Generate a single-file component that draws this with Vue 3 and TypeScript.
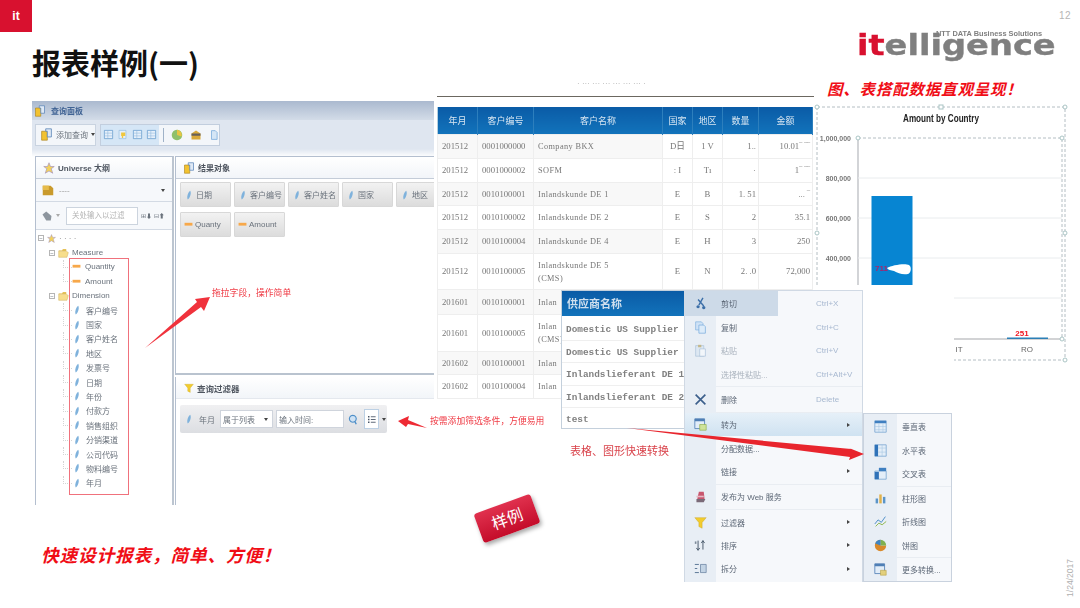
<script setup lang="ts">
import { h } from 'vue'

// icon shapes, all on a 16x16 grid
type Shape = { d: string; f?: string; s?: string; w?: number }
const shapes: Record<string, Shape[]> = {
  dim: [{ d: 'M10 1 C12 5 10 12 6 15 C4 11 6 4 10 1Z', f: '#7fb2dc' }],
  measure: [{ d: 'M1 5h14v5H1z', f: '#f7a84a' }],
  cube: [
    { d: 'M2 4h7v11H2z', f: '#f2c230', s: '#a8801a', w: 0.8 },
    { d: 'M7 1h7v10H9V4H7z', f: '#dfe9f5', s: '#5c86b8', w: 1 }
  ],
  star: [
    { d: 'M8 1l2 5 5 0-4 3 2 6-5-3-5 3 2-6-4-3 5 0z', f: '#f3d25c', s: '#9a8ac0', w: 0.8 }
  ],
  folder: [
    { d: 'M1 5h5l1-2h5v3H1z', f: '#e6c25a' },
    { d: 'M1 6h11l3 2-2 7H1z', f: '#f7de8c', s: '#caa548', w: 0.6 }
  ],
  db: [{ d: 'M2 3h9l3 3v8H2z', f: '#c99a2c' }, { d: 'M2 3h7v5H2z', f: '#e6bb4a' }],
  hand: [{ d: 'M2 6l5-4 7 6-1 6-6 0z', f: '#8d959e' }],
  grid: [
    { d: 'M2 2h12v12H2z', f: '#e6f0fa', s: '#5b93c9', w: 1 },
    { d: 'M2 6h12M2 10h12M7 2v12', s: '#8db6dc', w: 0.8 }
  ],
  bulb: [
    { d: 'M3 2h10v12H3z', f: '#e6f0fa', s: '#7fb0dc', w: 0.8 },
    { d: 'M6 5h6v5H9v3H7v-3H6z', f: '#f0c73e' }
  ],
  globe: [
    { d: 'M8 1a7 7 0 1 0 .01 0z', f: '#8fc06a' },
    { d: 'M8 1a7 7 0 0 1 6 9l-6-2z', f: '#e8c544' }
  ],
  box: [{ d: 'M2 6l6-4 6 4v8H2z', f: '#d9a93a' }, { d: 'M2 6h12v3H2z', f: '#67605a' }],
  doc: [{ d: 'M4 1h6l3 3v11H4z', f: '#d5e6f6', s: '#5f9ad6', w: 1 }],
  search: [
    { d: 'M7 2a5 5 0 1 0 .01 0z', f: '#cfe2f4', s: '#4d8ec8', w: 1.6 },
    { d: 'M10 11l2 4', s: '#4d8ec8', w: 2 }
  ],
  list: [
    { d: 'M3 3h2v2H3zM3 7h2v2H3zM3 11h2v2H3z', f: '#3d4a5c' },
    { d: 'M7 4h7M7 8h7M7 12h7', s: '#3d4a5c', w: 1.2 }
  ],
  funnel: [{ d: 'M1 2h14L10 8v7l-4-2V8z', f: '#f2cc2e', s: '#c8a420', w: 0.5 }],
  cut: [
    { d: 'M11 1L6 10M5 3l7 8', s: '#3c6fa8', w: 1.7 },
    { d: 'M5 10a2 2 0 1 0 .01 0zM12 11a2 2 0 1 0 .01 0z', f: '#3c6fa8' }
  ],
  copy: [
    { d: 'M2 1h7l2 2v8H2z', f: '#cfe2f6', s: '#7aaedd', w: 0.8 },
    { d: 'M6 5h6l2 2v8H6z', f: '#dcebf9', s: '#6ea6da', w: 0.8 }
  ],
  paste: [
    { d: 'M2 2h10v13H2z', f: '#dde8f2', s: '#a8c0d8', w: 0.8 },
    { d: 'M5 1h4v3H5z', f: '#c4b88c' },
    { d: 'M7 6h7v9H7z', f: '#f2f6fa', s: '#a8c0d8', w: 0.8 }
  ],
  del: [{ d: 'M2 2l12 12M14 2L2 14', s: '#3c5f8c', w: 2 }],
  convert: [
    { d: 'M1 1h12v12H1z', f: '#e2edf8', s: '#4f7fb5', w: 1 },
    { d: 'M1 1h12v3H1z', f: '#4f7fb5' },
    { d: 'M7 8h8v7H7z', f: '#cfe39a', s: '#8fae48', w: 0.8 }
  ],
  publish: [
    { d: 'M3 11h11l-2 4H3z', f: '#7a6a78' },
    { d: 'M6 2h6l1 9H4z', f: '#c8566e' },
    { d: 'M3 7h9v2H3z', f: '#e8b9c4' }
  ],
  sort: [
    { d: 'M5 2v11M3 11l2 3 2-3', s: '#4a5a6c', w: 1.2 },
    { d: 'M11 2v11M9 5l2-3 2 3', s: '#4a5a6c', w: 1.2 },
    { d: 'M1 3h2v3H1z', f: '#7c8a98' }
  ],
  split: [
    { d: 'M1 3h5M1 8h3M1 13h5', s: '#5a7696', w: 1.2 },
    { d: 'M8 3h7v10H8z', f: '#c2d3e4', s: '#5a7696', w: 0.8 }
  ],
  vtable: [
    { d: 'M1 1h14v14H1z', f: '#e4eef8', s: '#7aa6d2', w: 1 },
    { d: 'M1 1h14v3H1z', f: '#3f7fc0' },
    { d: 'M1 8h14M1 12h14M6 4v11M11 4v11', s: '#a8c6e2', w: 0.7 }
  ],
  htable: [
    { d: 'M1 1h14v14H1z', f: '#e4eef8', s: '#7aa6d2', w: 1 },
    { d: 'M1 1h4v14H1z', f: '#2f72b8' },
    { d: 'M5 5h10M5 10h10M10 1v14', s: '#a8c6e2', w: 0.7 }
  ],
  xtable: [
    { d: 'M1 5h14v10H1z', f: '#e4eef8', s: '#7aa6d2', w: 1 },
    { d: 'M6 1h9v4H6z', f: '#3f7fc0' },
    { d: 'M1 6h5v9H1z', f: '#2f72b8' }
  ],
  bars: [
    { d: 'M2 8h3v6H2z', f: '#5a94c8' },
    { d: 'M6.500 3h3v11h-3z', f: '#e0b24a' },
    { d: 'M11 6h3v8h-3z', f: '#5a94c8' }
  ],
  line: [
    { d: 'M1 11l4-5 4 3 5-7', s: '#4d8ec8', w: 1.2 },
    { d: 'M2 14l4-4 4 2 5-4', s: '#8fb84e', w: 1.2 }
  ],
  pie: [
    { d: 'M8 1a7 7 0 1 0 7 7H8z', f: '#d98a2b' },
    { d: 'M8 1a7 7 0 0 1 7 7H8z', f: '#7fb050' },
    { d: 'M1.500 5.500A7 7 0 0 1 8 1v7z', f: '#3f86c4' }
  ],
  more: [
    { d: 'M1 1h12v12H1z', f: '#e2edf8', s: '#4f7fb5', w: 1 },
    { d: 'M1 1h12v3H1z', f: '#4f7fb5' },
    { d: 'M8 9h7v6H8z', f: '#e2cf7c', s: '#b8a040', w: 0.7 }
  ]
}

// tiny functional icon so the template stays readable
const Ico = (props: { name: string; size?: number }) =>
  h(
    'svg',
    { viewBox: '0 0 16 16', width: props.size ?? 12, height: props.size ?? 12, style: 'flex:none;display:block' },
    shapes[props.name].map((p) =>
      h('path', { d: p.d, fill: p.f ?? 'none', stroke: p.s ?? 'none', 'stroke-width': p.w ?? 1 })
    )
  )

const measures = ['Quantity', 'Amount']
const dimensions = ['客户编号', '国家', '客户姓名', '地区', '发票号', '日期', '年份', '付款方', '销售组织', '分销渠道', '公司代码', '物料编号', '年月']
const chips = ['日期', '客户编号', '客户姓名', '国家', '地区']

const columns = ['年月', '客户编号', '客户名称', '国家', '地区', '数量', '金额']
type Row = { c: string[]; h: number }
const rows: Row[] = [
  { h: 24, c: ['201512', '0001000000', 'Company BKX', 'D日', '1 V', '1..', '10.01‾ ‾‾'] },
  { h: 24, c: ['201512', '0001000002', 'SOFM', ': I', 'Tı', '·', '1‾ ‾‾'] },
  { h: 23, c: ['201512', '0010100001', 'Inlandskunde DE 1', 'E', 'B', '1. 51', '... ‾'] },
  { h: 24, c: ['201512', '0010100002', 'Inlandskunde DE 2', 'E', 'S', '2', '35.1'] },
  { h: 24, c: ['201512', '0010100004', 'Inlandskunde DE 4', 'E', 'H', '3', '250'] },
  { h: 36, c: ['201512', '0010100005', 'Inlandskunde DE 5\n(CMS)', 'E', 'N', '2. .0', '72,000'] },
  { h: 25, c: ['201601', '0010100001', 'Inlan', '', '', '', ''] },
  { h: 37, c: ['201601', '0010100005', 'Inlan\n(CMS)', '', '', '', ''] },
  { h: 23, c: ['201602', '0010100001', 'Inlan', '', '', '', ''] },
  { h: 24, c: ['201602', '0010100004', 'Inlan', '', '', '', ''] }
]

const suppliers = ['Domestic US Supplier', 'Domestic US Supplier', 'Inlandslieferant DE 1', 'Inlandslieferant DE 2', 'test']

type MenuItem = { label: string; icon?: string; key?: string; arrow?: boolean; sep?: boolean; cls?: string }
const menu: MenuItem[] = [
  { label: '剪切', icon: 'cut', key: 'Ctrl+X', cls: 'cut-hl' },
  { label: '复制', icon: 'copy', key: 'Ctrl+C' },
  { label: '粘贴', icon: 'paste', key: 'Ctrl+V', cls: 'dim' },
  { label: '选择性粘贴...', key: 'Ctrl+Alt+V', cls: 'dim', sep: true },
  { label: '删除', icon: 'del', key: 'Delete', sep: true },
  { label: '转为', icon: 'convert', arrow: true, cls: 'active' },
  { label: '分配数据...' },
  { label: '链接', arrow: true, sep: true },
  { label: '发布为 Web 服务', icon: 'publish', sep: true },
  { label: '过滤器', icon: 'funnel', arrow: true },
  { label: '排序', icon: 'sort', arrow: true },
  { label: '拆分', icon: 'split', arrow: true }
]
const submenu: MenuItem[] = [
  { label: '垂直表', icon: 'vtable' },
  { label: '水平表', icon: 'htable' },
  { label: '交叉表', icon: 'xtable', sep: true },
  { label: '柱形图', icon: 'bars' },
  { label: '折线图', icon: 'line' },
  { label: '饼图', icon: 'pie', sep: true },
  { label: '更多转换...', icon: 'more' }
]

const yAxis = [
  { y: 138, t: '1,000,000' },
  { y: 178, t: '800,000' },
  { y: 218, t: '600,000' },
  { y: 258, t: '400,000' }
]
const handles = [
  [817, 107], [1065, 107], [817, 233], [1065, 233], [858, 138], [1062, 138], [1062, 339], [1065, 360]
]
</script>

<template>
  <div class="slide">
    <div class="corner">it</div>
    <h1 class="title">报表样例(一)</h1>
    <div class="page-no">12</div>

    <div class="logo"><span class="logo-it">it</span><span class="logo-rest">elligence</span></div>
    <span class="logo-sub">NTT DATA Business Solutions</span>

    <p class="slogan chart-slogan">图、表搭配数据直观呈现！</p>

    <!-- query panel screenshot -->
    <section class="query">
      <div class="query-head"><Ico name="cube" :size="12" /><span>查询面板</span></div>
      <div class="toolbar">
        <div class="tool-btn"><Ico name="cube" :size="13" /><span>添加查询</span><i class="caret"></i></div>
        <div class="tool-group">
          <div class="tool-on">
            <Ico name="grid" :size="11" /><Ico name="bulb" :size="11" /><Ico name="grid" :size="11" /><Ico name="grid" :size="11" />
          </div>
          <b class="tool-sep"></b>
          <Ico name="globe" :size="12" /><Ico name="box" :size="12" /><Ico name="doc" :size="10" />
        </div>
      </div>

      <div class="query-body">
        <aside class="outline">
          <div class="pane-head"><Ico name="star" :size="12" /><b>Universe 大纲</b></div>
          <div class="select-row"><Ico name="db" :size="14" /><span class="faint">----</span><i class="caret"></i></div>
          <div class="filter-row">
            <Ico name="hand" :size="12" />
            <i class="caret"></i>
            <span class="filter-input">关处输入以过滤</span>
            <span class="expand">⊞⬇ ⊟⬆</span>
          </div>
          <div class="tree">
            <div class="tree-row root"><span class="minus">−</span><Ico name="star" :size="9" /><span class="faint">· · · ·</span></div>
            <div class="tree-row folder"><span class="minus">−</span><Ico name="folder" :size="11" /><span>Measure</span></div>
            <div v-for="m in measures" :key="m" class="tree-row leaf"><Ico name="measure" :size="9" /><span>{{ m }}</span></div>
            <div class="tree-row folder"><span class="minus">−</span><Ico name="folder" :size="11" /><span>Dimension</span></div>
            <div v-for="d in dimensions" :key="d" class="tree-row leaf"><Ico name="dim" :size="10" /><span>{{ d }}</span></div>
            <div class="tree-mark"></div>
          </div>
        </aside>

        <div class="work">
          <div class="result">
            <div class="pane-head"><Ico name="cube" :size="12" /><b>结果对象</b></div>
            <div class="chips">
              <div v-for="c in chips" :key="c" class="chip"><Ico name="dim" :size="10" /><span>{{ c }}</span></div>
              <div v-for="m in measures" :key="m" class="chip"><Ico name="measure" :size="9" /><span>{{ m === 'Quantity' ? 'Quanty' : m }}</span></div>
            </div>
          </div>
          <div class="filter-pane">
            <div class="pane-head"><Ico name="funnel" :size="10" /><b>查询过滤器</b></div>
            <div class="filter-bar">
              <Ico name="dim" :size="10" />
              <span class="filter-name">年月</span>
              <span class="field pick">属于列表<i class="caret"></i></span>
              <span class="field time">输入时间:</span>
              <Ico name="search" :size="11" />
              <span class="list-btn"><Ico name="list" :size="11" /></span>
              <i class="caret"></i>
            </div>
          </div>
        </div>
      </div>
    </section>

    <!-- report table screenshot -->
    <section class="report">
      <div class="report-title">· ··· ··· ··· ··· ··· ··· ·</div>
      <div class="report-rule"></div>
      <table class="grid">
        <colgroup>
          <col style="width: 40px" /><col style="width: 56px" /><col style="width: 129px" />
          <col style="width: 30px" /><col style="width: 30px" /><col style="width: 36px" /><col style="width: 54px" />
        </colgroup>
        <thead>
          <tr><th v-for="c in columns" :key="c">{{ c }}</th></tr>
        </thead>
        <tbody>
          <tr v-for="(r, i) in rows" :key="i" :style="{ height: r.h + 'px' }">
            <td v-for="(v, j) in r.c" :key="j" :class="{ num: j > 4, name: j === 2, mid: j === 3 || j === 4 }">{{ v }}</td>
          </tr>
        </tbody>
      </table>
    </section>

    <!-- chart with selection frame -->
    <svg class="chart" viewBox="817 100 256 265" width="256" height="265">
      <g fill="none" stroke="#b4bec3" stroke-dasharray="3 2" stroke-width="1">
        <path d="M817 107H1065V360H954" />
        <path d="M817 107V285" />
        <path d="M858 138H1062V339" />
      </g>
      <path d="M858 138V285" stroke="#b5b8bc" stroke-width="1.200" />
      <path d="M858 178H1062M858 218H1062M858 258H1062M954 298H1062" stroke="#e9ecee" />
      <path d="M954 339H1062" stroke="#a5a8ab" stroke-width="1.200" />
      <g v-for="a in yAxis" :key="a.y">
        <text x="851" :y="a.y + 3" text-anchor="end" class="axis-num">{{ a.t }}</text>
      </g>
      <text x="941" y="122" text-anchor="middle" class="chart-title" textLength="76" lengthAdjust="spacingAndGlyphs">Amount by Country</text>
      <rect x="871.500" y="196" width="41" height="89" fill="#0785d2" />
      <text x="875" y="271" class="bar-label">711</text>
      <path d="M887 268c5-3 18-5 22-3 3 2 2 8-1 9-6 1-10-1-14-3-3-1-6-1-7-3z" fill="#fff" />
      <rect x="1007" y="337.500" width="41" height="1.500" fill="#2b7fb6" />
      <text x="1022" y="336" text-anchor="middle" class="red-num">251</text>
      <text x="959" y="352" text-anchor="middle" class="axis-name">IT</text>
      <text x="1027" y="352" text-anchor="middle" class="axis-name">RO</text>
      <circle v-for="p in handles" :key="p.join()" :cx="p[0]" :cy="p[1]" r="2" fill="#fff" stroke="#a9c4c4" />
      <rect x="939" y="105" width="4" height="4" fill="#fff" stroke="#a9c4c4" />
    </svg>

    <!-- supplier dropdown and context menus on top of the table -->
    <section class="supplier">
      <div class="supplier-head">供应商名称</div>
      <div v-for="(s, i) in suppliers" :key="i" class="supplier-row">{{ s }}</div>
    </section>

    <section class="menu">
      <template v-for="m in menu" :key="m.label">
        <div class="menu-row" :class="m.cls">
          <span class="menu-ico"><Ico v-if="m.icon" :name="m.icon" :size="13" /></span>
          <span class="menu-label">{{ m.label }}</span>
          <span class="menu-key">{{ m.key }}</span>
          <i v-if="m.arrow" class="menu-arrow"></i>
        </div>
        <div v-if="m.sep" class="menu-sep"></div>
      </template>
    </section>

    <section class="submenu">
      <template v-for="m in submenu" :key="m.label">
        <div class="sub-row">
          <span class="sub-ico"><Ico :name="m.icon!" :size="13" /></span>
          <span class="menu-label">{{ m.label }}</span>
        </div>
        <div v-if="m.sep" class="menu-sep sub"></div>
      </template>
    </section>

    <!-- annotation arrows -->
    <svg class="arrows" width="1080" height="608">
      <polygon points="145,348 197,302 195,299 210,297 204,311 201,307" fill="#f0323c" />
      <polygon points="398,421 409,416 408,420 427,428 408,424 406,427" fill="#ee2a34" />
      <polygon points="627,428 851,449 849,448 864,454 849,460 850,457" fill="#e8252d" />
    </svg>

    <span class="note note-drag">拖拉字段，操作简单</span>
    <span class="note note-filter">按需添加筛选条件，方便易用</span>
    <span class="note note-switch">表格、图形快速转换</span>

    <div class="stamp">样例</div>
    <p class="slogan design-slogan">快速设计报表，简单、方便！</p>
    <div class="date">1/24/2017</div>
  </div>
</template>

<style>
html,
body {
  margin: 0;
  background: #fff;
}
</style>

<style scoped>
.slide {
  position: relative;
  width: 1080px;
  height: 608px;
  overflow: hidden;
  background: #fff;
  font-family: "Liberation Sans", "Noto Sans CJK SC", sans-serif;
}

.corner {
  width: 32px;
  height: 32px;
  background: #d8112f;
  color: #fff;
  font-weight: 700;
  font-size: 12px;
  line-height: 32px;
  text-align: center;
}

.title {
  position: absolute;
  left: 32px;
  top: 41px;
  margin: 0;
  font-family: "Noto Sans CJK SC", sans-serif;
  font-size: 29px;
  line-height: 42px;
  font-weight: 700;
  color: #111;
}

.page-no {
  position: absolute;
  right: 9px;
  top: 10px;
  font-size: 10px;
  letter-spacing: 0.5px;
  color: #b5b5b5;
}

.logo {
  position: absolute;
  left: 857px;
  top: 25px;
  font-family: "DejaVu Sans", sans-serif;
  font-weight: 700;
  font-size: 29px;
  line-height: 40px;
  white-space: nowrap;
  transform: scaleX(1.16);
  transform-origin: left center;
  -webkit-text-stroke: 0.4px currentColor;
  filter: blur(0.3px);
}
.logo-it {
  color: #d8112f;
}
.logo-rest {
  color: #7f7f7f;
}
.logo-sub {
  position: absolute;
  left: 936px;
  top: 29px;
  font-size: 7.400px;
  line-height: 9px;
  font-weight: 700;
  color: #808080;
  white-space: nowrap;
  filter: blur(0.2px);
}

.slogan {
  position: absolute;
  margin: 0;
  font-family: "Noto Sans CJK SC", sans-serif;
  font-weight: 700;
  font-style: italic;
  color: #f00d16;
  white-space: nowrap;
}
.chart-slogan {
  left: 827px;
  top: 78px;
  font-size: 15.500px;
  line-height: 21px;
  letter-spacing: 0.800px;
}
.design-slogan {
  left: 41px;
  top: 542px;
  font-size: 17.700px;
  line-height: 25px;
  letter-spacing: 0.800px;
}

/* query panel */
.query {
  position: absolute;
  left: 32px;
  top: 101px;
  width: 402px;
  height: 404px;
  display: flex;
  flex-direction: column;
  font-size: 8px;
  color: #6a727c;
  white-space: nowrap;
  filter: blur(0.35px);
}
.query-head {
  height: 19px;
  flex: none;
  display: flex;
  align-items: center;
  gap: 5px;
  padding-left: 2px;
  background: linear-gradient(#aab9cf, #d3dce8);
  color: #3f6293;
  font-weight: 700;
}
.toolbar {
  height: 29px;
  flex: none;
  display: flex;
  align-items: center;
  gap: 4px;
  padding-left: 3px;
  background: #dfe6f0;
}
.tool-btn {
  width: 61px;
  height: 22px;
  box-sizing: border-box;
  display: flex;
  align-items: center;
  gap: 3px;
  padding-left: 4px;
  background: #f3f6fa;
  border: 1px solid #c9d3e0;
}
.tool-group {
  width: 120px;
  height: 22px;
  box-sizing: border-box;
  display: flex;
  align-items: center;
  gap: 7px;
  background: #f3f6fa;
  border: 1px solid #c2cede;
}
.tool-on {
  width: 61px;
  height: 100%;
  display: flex;
  align-items: center;
  justify-content: space-around;
  background: #d5e6f6;
}
.tool-sep {
  width: 1px;
  height: 14px;
  margin-left: -3px;
  background: #9fb2c8;
}
.caret {
  display: inline-block;
  flex: none;
  width: 0;
  height: 0;
  border-left: 2.500px solid transparent;
  border-right: 2.500px solid transparent;
  border-top: 3px solid #444;
}
.query-body {
  flex: 1;
  min-height: 0;
  display: flex;
  gap: 1px;
  padding: 7px 0 0 3px;
  background: linear-gradient(#dfe6f0 0, #fff 8px);
}
.outline {
  width: 139px;
  flex: none;
  box-sizing: border-box;
  border-left: 1.500px solid #b4bfcf;
  border-right: 2px solid #bcc5d0;
  border-top: 1.500px solid #b4bfcf;
  background: #fff;
}
.pane-head {
  height: 21px;
  display: flex;
  align-items: center;
  gap: 3px;
  padding-left: 7px;
  border-bottom: 1px solid #c4ccd8;
  background: linear-gradient(#fff, #f2f5f9);
  color: #4f5660;
}
.select-row {
  height: 22px;
  display: flex;
  align-items: center;
  gap: 4px;
  padding: 0 7px 0 5px;
  border-bottom: 1px solid #d3dae4;
  background: #f6f8fb;
}
.select-row .caret {
  margin-left: auto;
}
.faint {
  color: #999;
}
.filter-row {
  height: 27px;
  display: flex;
  align-items: center;
  gap: 3px;
  padding-left: 5px;
  border-bottom: 1px solid #d3dae4;
  background: #f6f8fb;
}
.filter-row .caret {
  border-top-color: #aaa;
}
.filter-input {
  width: 72px;
  height: 18px;
  box-sizing: border-box;
  margin-left: 3px;
  line-height: 16px;
  padding-left: 5px;
  background: #fff;
  border: 1px solid #ccd4de;
  color: #b3b3b3;
  font-size: 7.500px;
}
.expand {
  font-size: 6px;
  white-space: nowrap;
}
.tree {
  position: relative;
  padding-top: 1px;
}
.tree-row {
  position: relative;
  height: 14.400px;
  display: flex;
  align-items: center;
  gap: 3px;
}
.tree-row.root {
  padding-left: 2px;
}
.tree-row.folder {
  padding-left: 13px;
}
.tree-row.leaf {
  padding-left: 36px;
  gap: 4px;
}
.tree-row.leaf::before {
  content: "";
  position: absolute;
  left: 27px;
  top: 0;
  width: 8px;
  height: 50%;
  border-left: 1px dotted #d4d4d4;
  border-bottom: 1px dotted #d4d4d4;
}
.minus {
  width: 6px;
  height: 6px;
  box-sizing: border-box;
  flex: none;
  border: 1px solid #b5b5b5;
  font-size: 6px;
  line-height: 4px;
  text-align: center;
}
.tree-mark {
  position: absolute;
  left: 33px;
  top: 28px;
  width: 60px;
  height: 237px;
  box-sizing: border-box;
  border: 1px solid #f0717c;
}
.work {
  flex: 1;
  min-width: 0;
  display: flex;
  flex-direction: column;
}
.result {
  height: 219px;
  flex: none;
  box-sizing: border-box;
  overflow: hidden;
  border-left: 1.500px solid #b4bfcf;
  border-top: 1.500px solid #b4bfcf;
  border-bottom: 2px solid #b9c3cf;
  background: #fff;
}
.chips {
  display: flex;
  flex-wrap: wrap;
  gap: 5px 3px;
  width: 280px;
  padding: 3px 0 0 4px;
}
.chip {
  width: 51px;
  height: 25px;
  box-sizing: border-box;
  display: flex;
  align-items: center;
  gap: 2px;
  padding-left: 3px;
  background: linear-gradient(#f2f2f2, #dcdcdc);
  border: 1px solid #d8d8d8;
  border-radius: 1px;
}
.filter-pane {
  flex: 1;
  margin-top: 2px;
  border-left: 1.500px solid #b4bfcf;
  background: #fff;
}
.filter-pane .pane-head {
  height: 21px;
  padding-left: 8px;
  font-size: 8.500px;
  border-bottom: 1px solid #e4e8ee;
}
.filter-bar {
  width: 207px;
  height: 28px;
  box-sizing: border-box;
  margin: 6px 0 0 4px;
  display: flex;
  align-items: center;
  gap: 3px;
  padding-left: 4px;
  background: linear-gradient(#f0f0f2, #dcdee2);
  border-radius: 2px;
}
.filter-name {
  width: 18px;
  margin-left: 2px;
}
.field {
  height: 18px;
  box-sizing: border-box;
  display: flex;
  align-items: center;
  padding-left: 2px;
  background: #fff;
  border: 1px solid #cfd4dc;
}
.pick {
  width: 53px;
  justify-content: space-between;
  padding-right: 4px;
}
.time {
  width: 68px;
  margin-right: 1px;
}
.list-btn {
  width: 13px;
  height: 18px;
  margin-left: 2px;
  display: flex;
  align-items: center;
  justify-content: center;
  background: #fff;
  border: 1px solid #bcd0e4;
}

/* report */
.report {
  position: absolute;
  left: 437px;
  top: 78px;
  width: 377px;
  filter: blur(0.35px);
}
.report-title {
  height: 18px;
  padding-left: 140px;
  font-size: 8px;
  line-height: 12px;
  color: #bbb;
}
.report-rule {
  height: 1px;
  margin-bottom: 10px;
  background: #6b6760;
}
.grid {
  width: 375px;
  border-collapse: collapse;
  table-layout: fixed;
  border-left: 1px solid #b4d0e0;
  font-family: "Liberation Serif", "Noto Sans CJK SC", serif;
  font-size: 8.700px;
  color: #777;
}
.grid th {
  height: 27px;
  padding: 0;
  background: linear-gradient(#0a5ba6, #1273bb);
  border-right: 1px solid #2d7fbd;
  color: #d8e6f2;
  font-family: "Noto Sans CJK SC", sans-serif;
  font-size: 9px;
  font-weight: 400;
}
.grid td {
  padding: 0 4px;
  border: 1px solid #eee;
  overflow: hidden;
  white-space: nowrap;
  line-height: 13px;
}
.grid tbody tr:nth-child(odd) td {
  background: #f8f8f8;
}
.grid td.name {
  white-space: pre-line;
  font-size: 8.300px;
  letter-spacing: 0.400px;
}
.grid td.num {
  text-align: right;
  background: #fff !important;
  padding-right: 2px;
}
.grid td.mid {
  text-align: center;
  background: #fff !important;
}

/* chart */
.chart {
  position: absolute;
  left: 817px;
  top: 100px;
  overflow: visible;
  filter: blur(0.3px);
}
.chart-title {
  font-size: 11px;
  font-weight: 700;
  fill: #222;
}
.axis-num {
  font-size: 7px;
  font-weight: 700;
  fill: #777;
}
.axis-name {
  font-size: 8px;
  fill: #666;
}
.bar-label {
  font-size: 8px;
  font-weight: 700;
  fill: #a6256e;
}
.red-num {
  font-size: 8px;
  font-weight: 700;
  fill: #f0141e;
}

/* supplier list */
.supplier {
  position: absolute;
  left: 561px;
  top: 290px;
  width: 125px;
  height: 139px;
  box-sizing: border-box;
  overflow: hidden;
  background: #fff;
  border: 1px solid #c4d0dc;
  font-family: "Liberation Mono", monospace;
  font-size: 9.400px;
  font-weight: 700;
  color: #808080;
  white-space: nowrap;
  filter: blur(0.3px);
}
.supplier-head {
  height: 25px;
  margin-bottom: 2px;
  padding-left: 5px;
  background: linear-gradient(#0a5ba6, #1273bb);
  color: #cfdfee;
  font-family: "Noto Sans CJK SC", sans-serif;
  font-size: 11px;
  line-height: 25px;
}
.supplier-row {
  height: 22.500px;
  line-height: 23px;
  padding-left: 4px;
  border-bottom: 1px solid #efefef;
  box-sizing: border-box;
}

/* context menus */
.menu,
.submenu {
  position: absolute;
  box-sizing: border-box;
  font-size: 8px;
  color: #5c6776;
  filter: blur(0.3px);
}
.menu {
  left: 684px;
  top: 290px;
  width: 179px;
  height: 292px;
  padding-top: 1px;
  border: 1px solid #d0d9e4;
  border-bottom: 0;
  background: linear-gradient(to right, #e8eef5 31px, #f6f8fb 31px);
}
.menu-row {
  height: 23.300px;
  display: flex;
  align-items: center;
}
.menu-ico {
  width: 31px;
  flex: none;
  display: flex;
  justify-content: center;
}
.menu-label {
  margin-left: 5px;
  white-space: nowrap;
}
.menu-key {
  position: absolute;
  left: 131px;
  color: #a7b8d0;
  white-space: nowrap;
}
.menu-arrow {
  position: absolute;
  right: 12px;
  width: 0;
  height: 0;
  border-top: 2.500px solid transparent;
  border-bottom: 2.500px solid transparent;
  border-left: 3.500px solid #444;
}
.menu-row.cut-hl {
  margin-top: -1px;
  height: 25px;
  background: linear-gradient(to right, #cddae8 93px, transparent 93px);
}
.menu-row.dim .menu-label {
  color: #a9b2bd;
}
.menu-row.active {
  background: linear-gradient(#e6f0f8, #cfe2f1);
}
.menu-sep {
  height: 1px;
  margin: 0.500px 0 0.500px 31px;
  background: #e9edf2;
}
.submenu {
  left: 863px;
  top: 413px;
  width: 89px;
  height: 169px;
  padding-top: 1px;
  border: 1px solid #c9d2de;
  background: linear-gradient(to right, #e8eef5 33px, #f6f8fb 33px);
}
.sub-row {
  height: 23.500px;
  display: flex;
  align-items: center;
}
.sub-ico {
  width: 33px;
  flex: none;
  display: flex;
  justify-content: center;
}
.menu-sep.sub {
  margin: 0 0 0 33px;
}

.arrows {
  position: absolute;
  left: 0;
  top: 0;
  pointer-events: none;
}

.note {
  position: absolute;
  font-family: "Noto Sans CJK SC", sans-serif;
  color: #ef3a44;
  white-space: nowrap;
  filter: blur(0.25px);
}
.note-drag {
  left: 212px;
  top: 286px;
  font-size: 8.800px;
  line-height: 13px;
}
.note-filter {
  left: 430px;
  top: 414px;
  font-size: 8.800px;
  line-height: 13px;
}
.note-switch {
  left: 570px;
  top: 443px;
  font-size: 11px;
  line-height: 15px;
  color: #d9424a;
}

.stamp {
  position: absolute;
  left: 477px;
  top: 503px;
  width: 60px;
  height: 31px;
  border-radius: 3px;
  background: linear-gradient(#e0314e, #c40c2a);
  box-shadow: 1px 3px 4px rgba(0, 0, 0, 0.35);
  color: #fff;
  font-family: "Noto Sans CJK SC", sans-serif;
  font-size: 16px;
  line-height: 31px;
  text-align: center;
  transform: rotate(-20deg);
}

.date {
  position: absolute;
  left: 1048px;
  top: 573px;
  width: 44px;
  font-size: 8.500px;
  line-height: 10px;
  color: #b0b0b0;
  text-align: center;
  transform: rotate(-90deg);
}
</style>
